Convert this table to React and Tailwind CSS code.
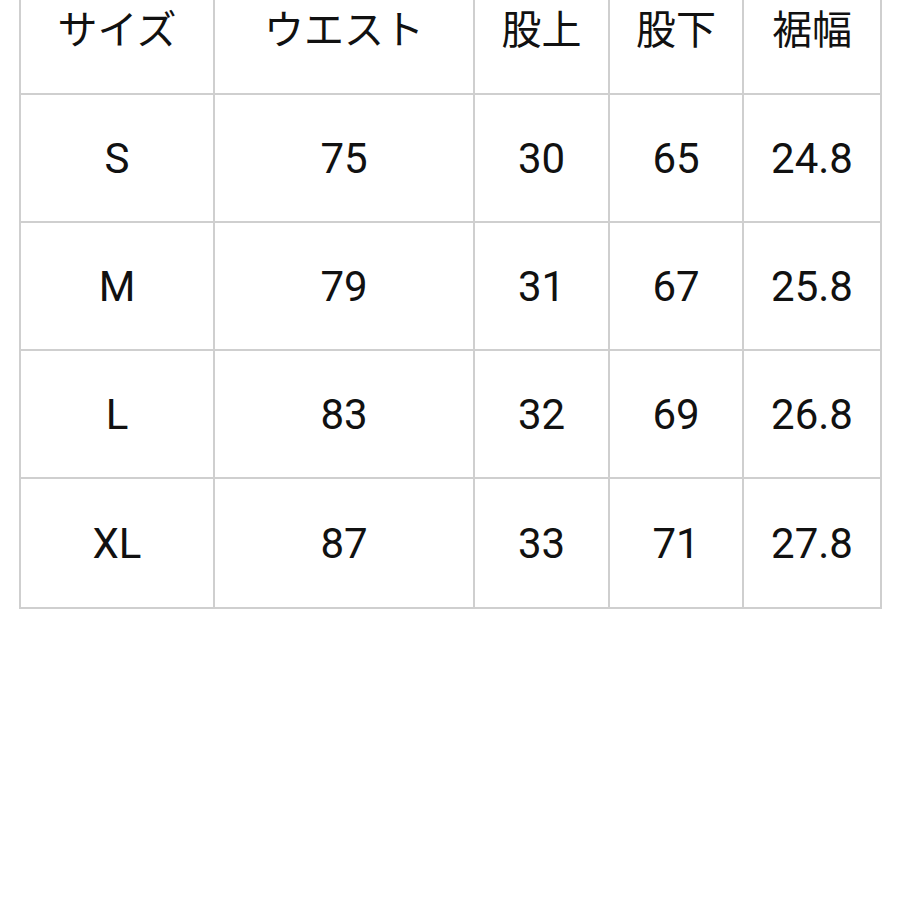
const headers = ["サイズ", "ウエスト", "股上", "股下", "裾幅"];
const rows = [
  ["S", "75", "30", "65", "24.8"],
  ["M", "79", "31", "67", "25.8"],
  ["L", "83", "32", "69", "26.8"],
  ["XL", "87", "33", "71", "27.8"],
];

const cols = "grid grid-cols-[192px_260px_135px_134px_138px]";

export default function App() {
  return (
    <div className="min-h-[900px] w-[900px] overflow-hidden bg-white">
      <div className="ml-[19px] mt-[-33px] w-[863px] border-2 border-t-0 border-[#cfcfcf] text-[#111111]">
        <div className={`${cols} h-[128px] border-b-2 border-[#cfcfcf]`}>
          {headers.map((h, i) => (
            <div
              key={h}
              className={`flex items-center justify-center pt-[2px] text-[40px] font-['Roboto','Noto_Sans_CJK_JP',sans-serif] ${i > 0 ? "border-l-2 border-[#cfcfcf]" : ""}`}
            >
              {h}
            </div>
          ))}
        </div>
        {rows.map((r, ri) => (
          <div key={r[0]} className={`${cols} h-[128px] ${ri < rows.length - 1 ? "border-b-2 border-[#cfcfcf]" : ""}`}>
            {r.map((c, i) => (
              <div
                key={i}
                className={`flex items-center justify-center text-[42px] font-['Roboto',sans-serif] ${i > 0 ? "border-l-2 border-[#cfcfcf]" : ""}`}
              >
                {c}
              </div>
            ))}
          </div>
        ))}
      </div>
    </div>
  );
}
